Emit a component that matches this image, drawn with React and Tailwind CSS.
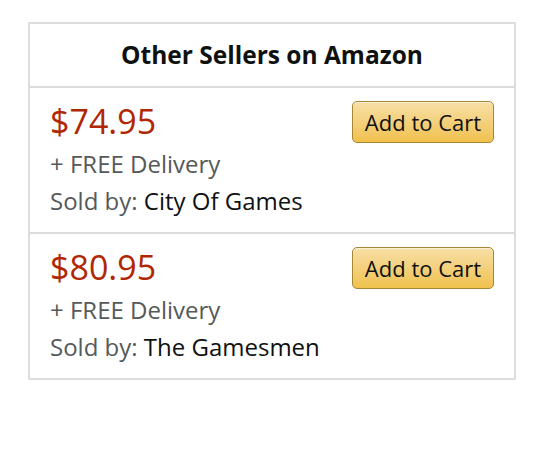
const offers = [
  { price: "$74.95", seller: "City Of Games" },
  { price: "$80.95", seller: "The Gamesmen" },
];

function OfferRow({ offer, last }) {
  return (
    <div className={`flex justify-between pl-[20px] pr-[20px] pt-[11px] pb-[15px] ${last ? "" : "border-b-2 border-[#dddddd]"}`}>
      <div className="flex flex-col">
        <div className="text-[34px] leading-[44px] text-[#b12704]">{offer.price}</div>
        <div className="text-[24px] leading-[42px] text-[#565959]">+ FREE Delivery</div>
        <div className="text-[24px] leading-[32px] text-[#565959]">
          Sold by: <span className="text-[#0f1111]">{offer.seller}</span>
        </div>
      </div>
      <button className="self-start mt-[2px] w-[142px] h-[42px] rounded-[5px] border border-[#a88734] bg-gradient-to-b from-[#f7dfa5] to-[#f0c14b] text-[22px] text-[#111111] shadow-[inset_0_1px_0_rgba(255,255,255,0.6)]">
        Add to Cart
      </button>
    </div>
  );
}

export default function App() {
  return (
    <div className="w-[534px] h-[472px] bg-white pt-[22px] pl-[28px]" style={{ fontFamily: '"Open Sans", "Liberation Sans", sans-serif' }}>
      <div className="w-[488px] border-2 border-[#dddddd]">
        <div className="h-[64px] flex items-center justify-center border-b-2 border-[#dddddd] text-[24.5px] font-bold text-[#0f1111]">
          Other Sellers on Amazon
        </div>
        {offers.map((o, i) => (
          <OfferRow key={o.price} offer={o} last={i === offers.length - 1} />
        ))}
      </div>
    </div>
  );
}
